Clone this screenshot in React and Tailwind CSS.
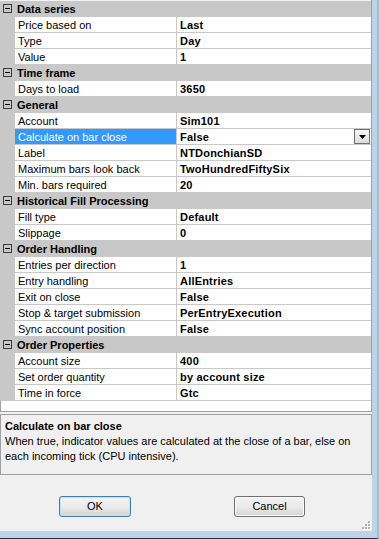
import React from 'react';

const sections = [
  {
    title: 'Data series',
    rows: [
      ['Price based on', 'Last'],
      ['Type', 'Day'],
      ['Value', '1'],
    ],
  },
  { title: 'Time frame', rows: [['Days to load', '3650']] },
  {
    title: 'General',
    rows: [
      ['Account', 'Sim101'],
      ['Calculate on bar close', 'False', true],
      ['Label', 'NTDonchianSD'],
      ['Maximum bars look back', 'TwoHundredFiftySix'],
      ['Min. bars required', '20'],
    ],
  },
  {
    title: 'Historical Fill Processing',
    rows: [
      ['Fill type', 'Default'],
      ['Slippage', '0'],
    ],
  },
  {
    title: 'Order Handling',
    rows: [
      ['Entries per direction', '1'],
      ['Entry handling', 'AllEntries'],
      ['Exit on close', 'False'],
      ['Stop & target submission', 'PerEntryExecution'],
      ['Sync account position', 'False'],
    ],
  },
  {
    title: 'Order Properties',
    rows: [
      ['Account size', '400'],
      ['Set order quantity', 'by account size'],
      ['Time in force', 'Gtc'],
    ],
  },
];

const CategoryRow = ({ title }) => (
  <div className="flex h-[16px] bg-[#c8c8c8]">
    {/* collapse box */}
    <span className="ml-[3px] mt-[3px] w-[9px] h-[9px] border border-[#3c3c3c] flex items-center justify-center">
      <span className="w-[5px] h-px bg-black" />
    </span>
    <span className="ml-[5px] pt-px leading-[15px] font-bold">{title}</span>
  </div>
);

const PropertyRow = ({ label, value, selected }) => (
  <div className="flex h-[16px] border-b border-[#c8c8c8]">
    <div className="w-[15px] bg-[#c8c8c8]" />
    <div
      className={`w-[161px] pl-[3px] pt-px leading-[15px] whitespace-nowrap ${
        selected ? 'bg-[#3399ff] text-white' : ''
      }`}
    >
      {label}
    </div>
    <div className="w-px bg-[#c8c8c8]" />
    <div className="flex-1 flex justify-between">
      <span className="pl-[3px] pt-px leading-[15px] font-bold tracking-[0.2px] whitespace-nowrap">
        {value}
      </span>
      {selected && (
        <span className="mr-px w-[16px] h-[15px] border border-[#6f6f6f] bg-linear-to-b from-[#f6f6f6] to-[#dcdcdc] flex items-center justify-center">
          <svg width="7" height="4" viewBox="0 0 7 4">
            <polygon points="0,0 7,0 3.5,4" fill="#000" />
          </svg>
        </span>
      )}
    </div>
  </div>
);

const DialogButton = ({ children, isDefault, width }) => (
  <button
    className={`h-[21px] rounded-[3px] border bg-linear-to-b from-[#f3f3f3] via-[#ebebeb] to-[#d4d4d4] leading-[19px] text-black ${width} ${
      isDefault ? 'border-[#3c7fb1] shadow-[inset_0_0_0_1px_#bfe3f7]' : 'border-[#707070] shadow-[inset_0_0_0_1px_#fbfbfb]'
    }`}
  >
    {children}
  </button>
);

const ResizeGrip = () => (
  <svg className="absolute right-[1px] bottom-[1px]" width="10" height="10" viewBox="0 0 10 10">
    {[
      [7, 1],
      [4, 4],
      [7, 4],
      [1, 7],
      [4, 7],
      [7, 7],
    ].map(([x, y]) => (
      <g key={`${x}-${y}`}>
        <rect x={x + 1} y={y + 1} width="2" height="2" fill="#ffffff" />
        <rect x={x} y={y} width="2" height="2" fill="#b0b0b0" />
      </g>
    ))}
  </svg>
);

export default function App() {
  return (
    <div className="w-[379px] h-[539px] overflow-hidden bg-[#bcd3ea] border-r-2 border-r-[#55dcf6] border-b border-b-[#1d3644] font-['Liberation_Sans',Arial,sans-serif] text-[11px] text-black">
      <div className="w-[372px] h-[531px] bg-[#f0f0f0] flex flex-col">
        {/* Property grid */}
        <div className="w-[372px] border-r border-b border-[#a0a0a0] bg-white">
          <div className="h-px bg-[#f2f2f2]" />
          {sections.map((section) => (
            <div key={section.title}>
              <CategoryRow title={section.title} />
              {section.rows.map(([label, value, selected]) => (
                <PropertyRow key={label} label={label} value={value} selected={selected} />
              ))}
            </div>
          ))}
          <div className="h-[10px] border-l border-[#a0a0a0]" />
        </div>

        {/* Help panel */}
        <div className="mt-[2px] h-[61px] border border-[#a0a0a0] px-[4px]">
          <div className="pt-[5px] leading-[13px] font-bold">Calculate on bar close</div>
          <div className="mt-px leading-[15px]">
            When true, indicator values are calculated at the close of a bar, else on each incoming tick (CPU
            intensive).
          </div>
        </div>

        {/* Buttons */}
        <div className="relative flex-1 flex items-start gap-[103px] pt-[21px] pl-[59px]">
          <DialogButton isDefault width="w-[72px]">OK</DialogButton>
          <DialogButton width="w-[71px]">Cancel</DialogButton>
          <ResizeGrip />
        </div>
      </div>
    </div>
  );
}
